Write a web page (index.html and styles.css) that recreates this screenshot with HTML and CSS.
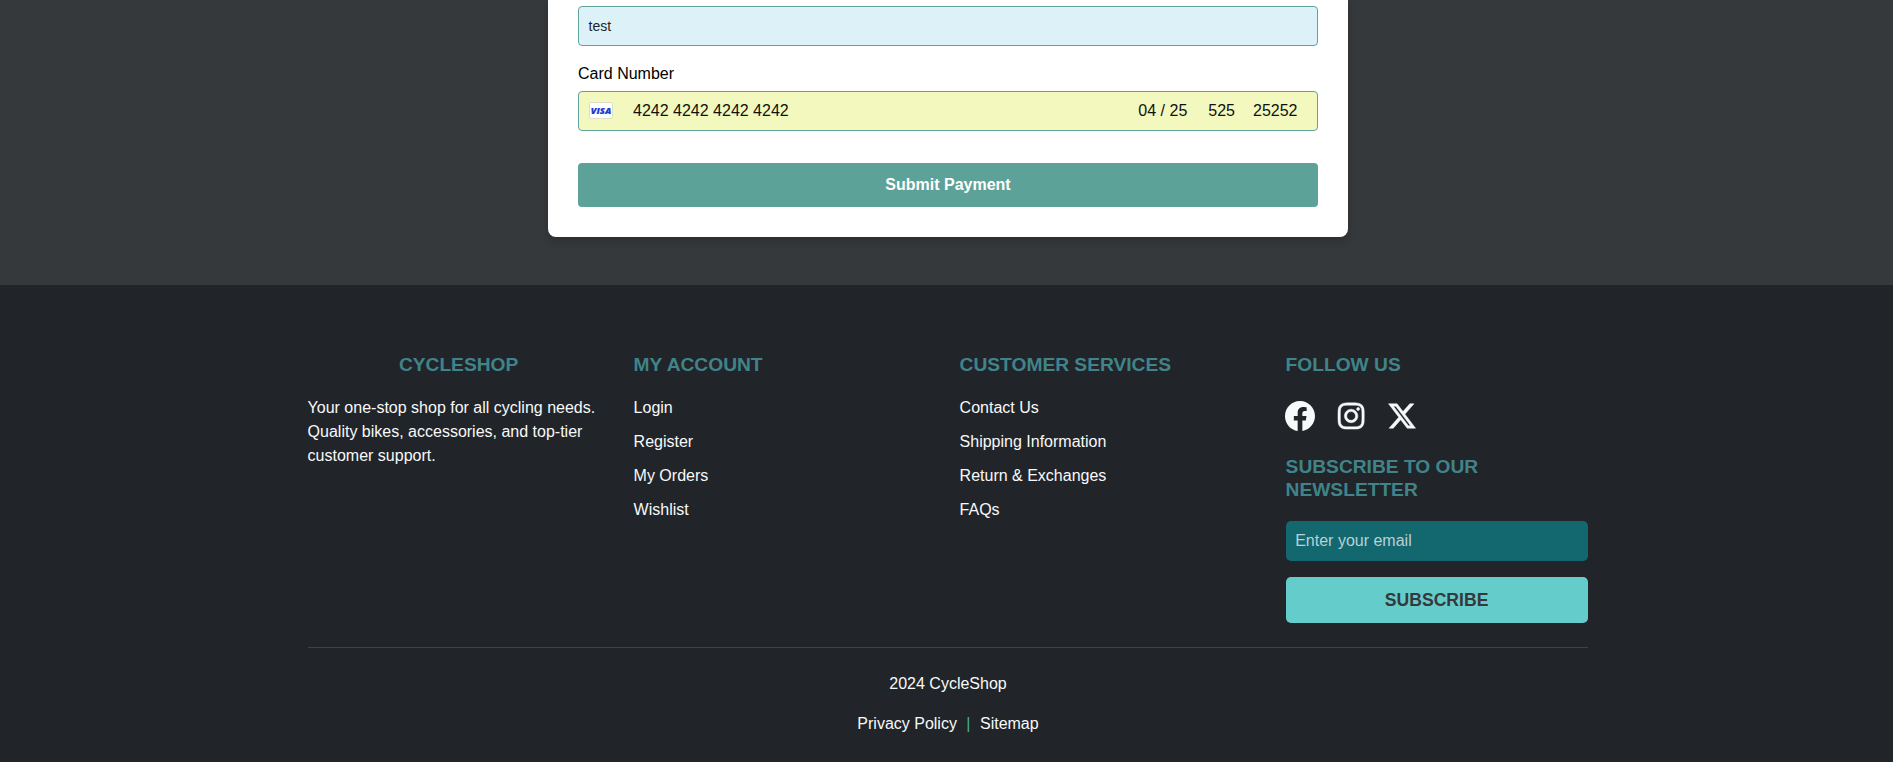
FILE: index.html
```html
<!DOCTYPE html>
<html lang="en">
<head>
<meta charset="utf-8">
<title>CycleShop</title>
<link rel="stylesheet" href="styles.css">
</head>
<body>
<main class="checkout">
  <form class="card">
    <div class="field name-field">test</div>
    <label class="label">Card Number</label>
    <div class="field card-field">
      <svg class="visa" viewBox="0 0 24 17"><rect x=".5" y=".5" width="23" height="16" rx="1.5" fill="#fff" stroke="#dfdfc8"/><text x="12" y="11.600" text-anchor="middle" textLength="20.500" lengthAdjust="spacingAndGlyphs">VISA</text></svg>
      <span class="number">4242 4242 4242 4242</span>
      <span class="expiry">04 / 25</span>
      <span class="cvc">525</span>
      <span class="zip">25252</span>
    </div>
    <button type="button" class="submit">Submit Payment</button>
  </form>
</main>
<footer class="footer">
  <div class="columns">
    <section>
      <h5 class="heading centered">CYCLESHOP</h5>
      <p class="about">Your one-stop shop for all cycling needs. Quality bikes, accessories, and top-tier customer support.</p>
    </section>
    <section>
      <h5 class="heading">MY ACCOUNT</h5>
      <ul class="links"><li>Login</li><li>Register</li><li>My Orders</li><li>Wishlist</li></ul>
    </section>
    <section>
      <h5 class="heading">CUSTOMER SERVICES</h5>
      <ul class="links"><li>Contact Us</li><li>Shipping Information</li><li>Return &amp; Exchanges</li><li>FAQs</li></ul>
    </section>
    <section>
      <h5 class="heading">FOLLOW US</h5>
      <div class="social">
        <svg class="icon" viewBox="0 0 16 16"><path d="M16 8.049c0-4.446-3.582-8.050-8-8.050C3.580 0-.002 3.603-.002 8.050c0 4.017 2.926 7.347 6.750 7.951v-5.625h-2.030V8.050H6.750V6.275c0-2.017 1.195-3.131 3.022-3.131.876 0 1.791.157 1.791.157v1.980h-1.009c-.993 0-1.303.621-1.303 1.258v1.510h2.218l-.354 2.326H9.250V16c3.824-.604 6.750-3.934 6.750-7.951z"/></svg>
        <svg class="icon instagram" viewBox="0 32 448 448"><path d="M224.100 141c-63.600 0-114.900 51.300-114.900 114.900s51.300 114.900 114.900 114.900S339 319.500 339 255.900 287.700 141 224.100 141zm0 189.600c-41.100 0-74.700-33.500-74.700-74.700s33.500-74.700 74.700-74.700 74.700 33.500 74.700 74.700-33.600 74.700-74.700 74.700zm146.400-194.300c0 14.900-12 26.800-26.800 26.800-14.900 0-26.800-12-26.800-26.800s12-26.800 26.800-26.800 26.800 12 26.800 26.800zm76.100 27.200c-1.700-35.900-9.900-67.700-36.200-93.900-26.200-26.200-58-34.400-93.900-36.200-37-2.100-147.900-2.100-184.900 0-35.800 1.700-67.600 9.900-93.900 36.100s-34.400 58-36.200 93.900c-2.100 37-2.100 147.900 0 184.900 1.700 35.900 9.900 67.700 36.200 93.900s58 34.400 93.900 36.200c37 2.100 147.900 2.100 184.900 0 35.900-1.700 67.700-9.900 93.900-36.200 26.200-26.200 34.400-58 36.200-93.900 2.100-37 2.100-147.800 0-184.800zM398.800 388c-7.800 19.600-22.900 34.700-42.600 42.600-29.500 11.700-99.500 9-132.100 9s-102.700 2.600-132.100-9c-19.600-7.800-34.700-22.900-42.600-42.600-11.700-29.500-9-99.500-9-132.100s-2.600-102.700 9-132.100c7.800-19.600 22.900-34.700 42.600-42.600 29.500-11.700 99.500-9 132.100-9s102.700-2.600 132.100 9c19.600 7.800 34.700 22.900 42.600 42.600 11.700 29.500 9 99.500 9 132.100s2.700 102.700-9 132.100z"/></svg>
        <svg class="icon x-logo" viewBox="0 0 512 512"><path d="M389.200 48h70.600L305.600 224.200 487 464H345L233.700 318.600 106.500 464H35.800L200.700 275.500 26.800 48H172.400L272.900 180.900 389.200 48zM364.400 421.800h39.100L151.100 88h-42L364.400 421.800z"/></svg>
      </div>
      <h5 class="heading">SUBSCRIBE TO OUR NEWSLETTER</h5>
      <div class="email">Enter your email</div>
      <button type="button" class="subscribe">SUBSCRIBE</button>
    </section>
  </div>
  <div class="legal">
    <p>2024 CycleShop</p>
    <p>Privacy Policy <span class="divider">|</span> Sitemap</p>
  </div>
</footer>
</body>
</html>
```
FILE: styles.css
```css
* { box-sizing: border-box; }
html { overflow: hidden; }
body {
  width: 1896px;
  height: 762px;
  margin: 0;
  display: flex;
  flex-direction: column;
  font: 16px/24px "Liberation Sans", Arial, sans-serif;
  background: #212529;
  color: #f8f9fa;
}
h5, p, ul { margin: 0; padding: 0; }
.checkout {
  height: 285px;
  background: #36393b;
  display: flex;
  justify-content: center;
  align-items: flex-start;
}
.card {
  width: 800px;
  height: 237px;
  padding: 6px 30px 30px;
  background: #fff;
  border-radius: 0 0 8px 8px;
  box-shadow: 0 4px 8px rgba(0, 0, 0, .2);
  display: flex;
  flex-direction: column;
}
.field {
  height: 40px;
  padding: 0 10px;
  border: 1px solid #5fa399;
  border-radius: 4px;
  display: flex;
  align-items: center;
}
.name-field { background: #ddf1f8; color: #212529; font-size: 14px; padding-left: 9.500px; padding-bottom: 1px; }
.label { margin: 16px 0 5px; color: #000; }
.card-field { background: #f3f9be; color: #111; padding-right: 19.500px; }
.visa { width: 24px; height: 17px; margin: 0 20px 1px 0; }
.visa text { font: italic 800 9px "Open Sans", sans-serif; fill: #1a3ad0; stroke: #1a3ad0; stroke-width: .2; }
.number { flex: 1; }
.expiry { margin-right: 21px; }
.cvc { margin-right: 18px; }
.submit {
  height: 44px;
  margin-top: 32px;
  border: 0;
  border-radius: 4px;
  background: #5da298;
  color: #fff;
  font: bold 16px "Liberation Sans", Arial, sans-serif;
}
.footer { flex: 1; padding: 68px 307.600px 0; background: #212529; }
.columns {
  display: grid;
  grid-template-columns: repeat(4, 302px);
  gap: 24px;
  height: 295px;
  border-bottom: 1px solid #2f4a4a;
}
.heading { font-size: 19.200px; line-height: 23px; font-weight: bold; color: #40848a; margin-bottom: 20px; }
.centered { text-align: center; }
.about { margin-right: -5px; }
.links { list-style: none; display: grid; gap: 10px; }
.social { display: flex; gap: 23px; margin: 0 0 24px -.600px; padding-top: 5px; height: 35px; }
.icon { width: 30px; height: 30px; fill: #f8f9fa; }
.instagram { width: 26.250px; overflow: visible; stroke: #f8f9fa; stroke-width: 8; }
.x-logo { stroke: #f8f9fa; stroke-width: 9; }
.email { height: 40px; padding: 8px 9.600px; border-radius: 5px; background: #13676f; color: #b8d1d4; margin-bottom: 16px; }
.subscribe {
  width: 302px;
  height: 46px;
  display: block;
  border: 0;
  border-radius: 5px;
  background: #64cdcb;
  color: #36393b;
  font: bold 17.600px "Liberation Sans", Arial, sans-serif;
}
.legal { display: grid; gap: 16px; padding-top: 24px; text-align: center; }
.divider { margin: 0 5px; color: #4caf8f; }
```
